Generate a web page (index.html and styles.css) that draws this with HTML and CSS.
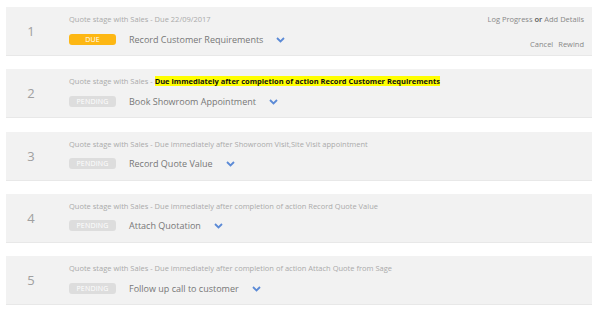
FILE: index.html
```html
<!DOCTYPE html>
<html>
<head>
<meta charset="utf-8">
<link rel="stylesheet" href="styles.css">
</head>
<body>
<div class="list">
  <div class="card">
    <div class="num">1</div>
    <div class="main">
      <div class="sub">Quote stage with Sales - Due 22/09/2017</div>
      <div class="row">
        <span class="badge due">DUE</span>
        <span class="title">Record Customer Requirements</span>
        <svg class="chev" width="9" height="6" viewBox="0 0 9 6"><path d="M1 1 L4.5 4.5 L8 1" fill="none" stroke="#5b8ad6" stroke-width="1.8"/></svg>
      </div>
    </div>
    <div class="actions">
      <div class="act-top"><span class="link">Log Progress</span> <span class="or">or</span> <span class="link">Add Details</span></div>
      <div class="act-bottom"><span class="link">Cancel</span><span class="link">Rewind</span></div>
    </div>
  </div>
  <div class="card">
    <div class="num">2</div>
    <div class="main">
      <div class="sub">Quote stage with Sales - <span class="hl">Due immediately after completion of action Record Customer Requirements</span></div>
      <div class="row">
        <span class="badge pending">PENDING</span>
        <span class="title">Book Showroom Appointment</span>
        <svg class="chev" width="9" height="6" viewBox="0 0 9 6"><path d="M1 1 L4.5 4.5 L8 1" fill="none" stroke="#5b8ad6" stroke-width="1.8"/></svg>
      </div>
    </div>
  </div>
  <div class="card">
    <div class="num">3</div>
    <div class="main">
      <div class="sub">Quote stage with Sales - Due immediately after Showroom Visit,Site Visit appointment</div>
      <div class="row">
        <span class="badge pending">PENDING</span>
        <span class="title">Record Quote Value</span>
        <svg class="chev" width="9" height="6" viewBox="0 0 9 6"><path d="M1 1 L4.5 4.5 L8 1" fill="none" stroke="#5b8ad6" stroke-width="1.8"/></svg>
      </div>
    </div>
  </div>
  <div class="card">
    <div class="num">4</div>
    <div class="main">
      <div class="sub">Quote stage with Sales - Due immediately after completion of action Record Quote Value</div>
      <div class="row">
        <span class="badge pending">PENDING</span>
        <span class="title">Attach Quotation</span>
        <svg class="chev" width="9" height="6" viewBox="0 0 9 6"><path d="M1 1 L4.5 4.5 L8 1" fill="none" stroke="#5b8ad6" stroke-width="1.8"/></svg>
      </div>
    </div>
  </div>
  <div class="card">
    <div class="num">5</div>
    <div class="main">
      <div class="sub">Quote stage with Sales - Due immediately after completion of action Attach Quote from Sage</div>
      <div class="row">
        <span class="badge pending">PENDING</span>
        <span class="title">Follow up call to customer</span>
        <svg class="chev" width="9" height="6" viewBox="0 0 9 6"><path d="M1 1 L4.5 4.5 L8 1" fill="none" stroke="#5b8ad6" stroke-width="1.8"/></svg>
      </div>
    </div>
  </div>
</div>
</body>
</html>
```
FILE: styles.css
```css
html, body {
  margin: 0;
  padding: 0;
  background: #ffffff;
  font-family: "Open Sans", "Noto Sans", sans-serif;
}
.list {
  display: flex;
  flex-direction: column;
  gap: 13.25px;
  padding: 7px 8px 0 6px;
}
.card {
  display: flex;
  align-items: stretch;
  height: 49px;
  background: #f2f2f2;
  border-bottom: 1px solid #e8e8e8;
  box-sizing: border-box;
}
.num {
  width: 50px;
  display: flex;
  align-items: center;
  justify-content: center;
  font-size: 13px;
  color: #a0a0a0;
}
.main {
  flex: 1;
  padding-left: 13px;
  padding-top: 6px;
}
.sub {
  font-size: 7.5px;
  color: #aaaaaa;
  line-height: 12px;
  white-space: nowrap;
}
.hl {
  background: #ffff00;
  color: #111111;
  font-weight: 700;
}
.row {
  display: flex;
  align-items: center;
  margin-top: 8px;
  height: 12px;
}
.badge {
  width: 47px;
  height: 11px;
  border-radius: 3px;
  color: #ffffff;
  font-size: 7px;
  display: flex;
  align-items: center;
  justify-content: center;
  letter-spacing: 0.2px;
}
.badge.due {
  background: #fdb713;
}
.badge.pending {
  background: #dddddd;
}
.title {
  margin-left: 13px;
  font-size: 9px;
  color: #777777;
}
.chev {
  margin-left: 13px;
  margin-top: 1px;
}
.actions {
  display: flex;
  flex-direction: column;
  align-items: flex-end;
  padding-right: 8px;
  padding-top: 6px;
  font-size: 7.5px;
  color: #888888;
}
.act-top {
  line-height: 12px;
}
.or {
  color: #555555;
  font-weight: 600;
}
.act-bottom {
  margin-top: 13px;
  line-height: 12px;
  display: flex;
  gap: 5px;
}
```
